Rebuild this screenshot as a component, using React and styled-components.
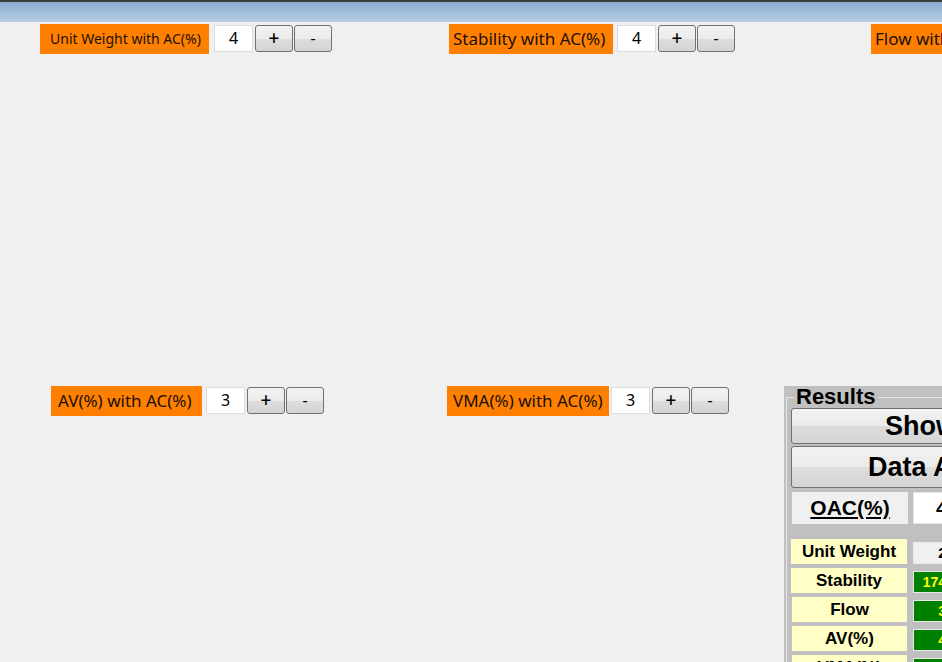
import React from "react";
import styled, { createGlobalStyle } from "styled-components";

const Global = createGlobalStyle`
  html, body { margin: 0; padding: 0; height: 100%; overflow: hidden; }
  body { background: #f0f0f0; font-family: "Noto Sans", "Liberation Sans", sans-serif; color: #111; }
  #root { height: 100%; }
`;

const Page = styled.div`
  height: 100%;
  display: flex;
  flex-direction: column;
  overflow: hidden;
`;

const TitleBar = styled.div`
  height: 22px;
  flex: none;
  box-sizing: border-box;
  border-top: 2px solid #3d3d3d;
  background: linear-gradient(#8aaacd, #b9cee4);
`;

const Row = styled.div`
  display: grid;
  grid-template-columns: ${(p) => p.$cols};
  padding-left: ${(p) => p.$left}px;
  margin-top: ${(p) => p.$top}px;
  align-items: start;
`;

const Control = styled.div`
  display: flex;
  align-items: flex-start;
`;

const Label = styled.div`
  box-sizing: border-box;
  width: ${(p) => p.$w}px;
  height: 30px;
  padding-left: ${(p) => p.$pad}px;
  background: #ff8000;
  color: #1a1008;
  font-size: ${(p) => p.$size}px;
  line-height: 30px;
  white-space: nowrap;
  overflow: hidden;
`;

const NumBox = styled.div`
  box-sizing: border-box;
  width: 39px;
  height: 27px;
  margin: 1px 2px 0 ${(p) => p.$gap}px;
  background: #fff;
  border: 1px solid #dcdcdc;
  font-size: 16px;
  line-height: 25px;
  text-align: center;
  color: #000;
`;

const StepButton = styled.button`
  box-sizing: border-box;
  width: 38px;
  height: 27px;
  margin: 1px 1px 0 0;
  padding: 0;
  border: 1px solid #707070;
  border-radius: 3px;
  background: linear-gradient(#f2f2f2 0%, #ebebeb 50%, #dddddd 51%, #d4d4d4 100%);
  font-family: "Noto Sans", "Liberation Sans", sans-serif;
  font-size: ${(p) => (p.$plus ? 19 : 16)}px;
  font-weight: ${(p) => (p.$plus ? 500 : 400)};
  line-height: 25px;
  color: #000;
`;

const Spacer = styled.div`
  height: 332px;
  flex: none;
`;

const Panel = styled.div`
  background: #c0c0c0;
  height: 320px;
  padding-left: 2px;
  overflow: hidden;
`;

const Group = styled.fieldset`
  margin: 0;
  padding: 0 0 0 4px;
  border: none;
  border-top: 1px solid #e6e6e6;
  border-left: 1px solid #e6e6e6;
  min-width: 0;
  height: 100%;
`;

const Legend = styled.legend`
  margin-left: 3px;
  padding: 0 3px 0 2px;
  font-family: "Liberation Sans", sans-serif;
  font-weight: 700;
  font-size: 22px;
  line-height: 22px;
  color: #000;
`;

const BigButton = styled.button`
  box-sizing: border-box;
  display: block;
  width: 360px;
  height: ${(p) => p.$h}px;
  margin-top: ${(p) => p.$mt}px;
  padding: 0 0 0 ${(p) => p.$pad}px;
  text-align: left;
  border: 1px solid #707070;
  border-radius: 3px;
  background: linear-gradient(#f2f2f2 0%, #ebebeb 50%, #dddddd 51%, #d4d4d4 100%);
  font-family: "Liberation Sans", sans-serif;
  font-weight: 700;
  font-size: 27px;
  color: #000;
  white-space: nowrap;
`;

const OacRow = styled.div`
  display: grid;
  grid-template-columns: 116px 100px;
  column-gap: 5px;
  margin: 4px 0 0 1px;
  height: 32px;
`;

const OacLabel = styled.div`
  background: #f0f0f0;
  font-family: "Liberation Sans", sans-serif;
  font-weight: 700;
  font-size: 21px;
  line-height: 32px;
  text-align: center;
  text-decoration: underline;
  color: #000;
`;

const OacValue = styled.div`
  box-sizing: border-box;
  background: #fff;
  border: 1px solid #e4e4e4;
  font-family: "Liberation Sans", sans-serif;
  font-weight: 700;
  font-size: 21px;
  line-height: 30px;
  padding-left: 22px;
  color: #000;
`;

const Table = styled.div`
  display: grid;
  grid-template-columns: 116px 70px;
  column-gap: 6px;
  row-gap: 4px;
  margin-top: 15px;
`;

const RowLabel = styled.div`
  height: 25px;
  background: #ffffc6;
  font-family: "Liberation Sans", sans-serif;
  font-weight: 700;
  font-size: 17px;
  line-height: 25px;
  text-align: center;
  color: #000;
  margin-left: ${(p) => p.$shift || 0}px;
`;

const RowValue = styled.div`
  box-sizing: border-box;
  height: 22px;
  margin-top: 3px;
  border: 1px solid #e8e8e8;
  background: ${(p) => (p.$ok ? "#008000" : "#f0f0f0")};
  color: ${(p) => (p.$ok ? "#ffff00" : "#000")};
  font-family: "Liberation Sans", sans-serif;
  font-weight: 700;
  font-size: 14px;
  line-height: 20px;
  text-align: center;
`;

function Stepper({ label, w, pad, size, value, gap }) {
  return (
    <Control>
      <Label $w={w} $pad={pad} $size={size}>{label}</Label>
      <NumBox $gap={gap}>{value}</NumBox>
      <StepButton $plus>+</StepButton>
      <StepButton>-</StepButton>
    </Control>
  );
}

const results = [
  { label: "Unit Weight", value: "2.3", ok: false },
  { label: "Stability", value: "1745.26", ok: true },
  { label: "Flow", value: "3.5", ok: true, shift: 1 },
  { label: "AV(%)", value: "4.1", ok: true, shift: 1 },
  { label: "VMA(%)", value: "15.2", ok: true, shift: 1 },
];

export default function App() {
  return (
    <Page>
      <Global />
      <TitleBar />
      <Row $cols="409px 422px auto" $left={40} $top={2}>
        <Stepper label="Unit Weight with AC(%)" w={169} pad={10} size={14} value="4" gap={5} />
        <Stepper label="Stability with AC(%)" w={164} pad={4} size={17} value="4" gap={4} />
        <Stepper label="Flow with AC(%)" w={150} pad={4} size={17} value="4" gap={4} />
      </Row>
      <Spacer />
      <Row $cols="396px 337px 1fr" $left={51} $top={0}>
        <Stepper label="AV(%) with AC(%)" w={151} pad={7} size={17} value="3" gap={4} />
        <Stepper label="VMA(%) with AC(%)" w={162} pad={6} size={17} value="3" gap={2} />
        <Panel>
          <Group>
            <Legend>Results</Legend>
            <BigButton $h={36} $mt={0} $pad={93}>Show Graph</BigButton>
            <BigButton $h={42} $mt={2} $pad={76}>Data Analysis</BigButton>
            <OacRow>
              <OacLabel>OAC(%)</OacLabel>
              <OacValue>4.2</OacValue>
            </OacRow>
            <Table>
              {results.map((r) => (
                <React.Fragment key={r.label}>
                  <RowLabel $shift={r.shift}>{r.label}</RowLabel>
                  <RowValue $ok={r.ok}>{r.value}</RowValue>
                </React.Fragment>
              ))}
            </Table>
          </Group>
        </Panel>
      </Row>
    </Page>
  );
}
